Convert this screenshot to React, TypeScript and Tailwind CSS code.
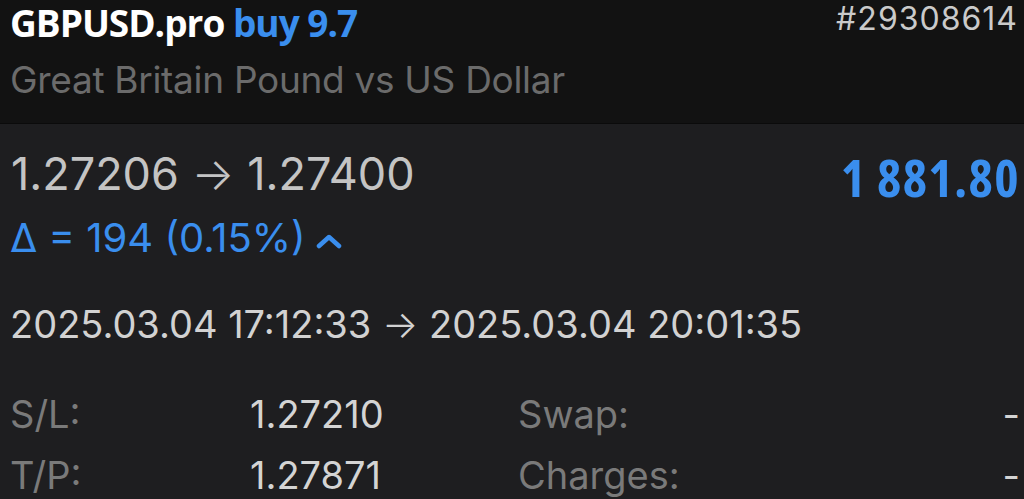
const sans = { fontFamily: 'Inter, "Liberation Sans", sans-serif' };
const cond = { fontFamily: '"Open Sans", "Liberation Sans", sans-serif' };

export default function App() {
  return (
    <div className="w-[1024px] h-[499px] overflow-hidden bg-[#1e1e20]" style={sans}>
      {/* Header */}
      <div className="h-[124px] bg-[#121212] border-b border-[#0b0b0b] flex justify-between pl-[10px] pr-[6px]">
        <div className="flex flex-col">
          <div
            className="text-[37px] font-bold font-stretch-[88%] leading-[1.2] pt-[1px] tracking-[-1px] whitespace-nowrap"
            style={cond}
          >
            <span className="text-white">GBPUSD.pro</span>{' '}
            <span className="text-[#3a8eee]">buy 9.7</span>
          </div>
          <div className="text-[37px] text-[#6b6b6b] leading-none mt-[16px] tracking-[-0.3px] whitespace-nowrap">
            Great Britain Pound vs US Dollar
          </div>
        </div>
        <div className="text-[32px] text-[#cacaca] leading-[1.2] tracking-[1px]">#29308614</div>
      </div>

      {/* Prices */}
      <div className="flex justify-between items-start pl-[11px] pr-[4px] pt-[27px]">
        <div className="text-[45px] text-[#c4c4c4] leading-none whitespace-nowrap">
          1.27206 <span className="font-light">→</span> 1.27400
        </div>
        <div
          className="text-[52px] font-bold font-stretch-condensed tracking-[1.3px] text-[#3a8eee] leading-none"
          style={cond}
        >
          1 881.80
        </div>
      </div>

      <div className="flex items-center pl-[10px] mt-[15px] text-[40px] text-[#3a8eee] leading-none whitespace-nowrap">
        <span>Δ = 194 (0.15%)</span>
        <svg width="26" height="16" viewBox="0 0 26 16" className="ml-[10px] mt-[6px]">
          <polyline
            points="3,13 13,4 23,13"
            fill="none"
            stroke="#3a8eee"
            strokeWidth="4.5"
            strokeLinecap="round"
            strokeLinejoin="round"
          />
        </svg>
      </div>

      {/* Times */}
      <div className="pl-[10px] mt-[47px] text-[38px] text-[#d2d2d2] leading-none whitespace-nowrap">
        2025.03.04 17:12:33 <span className="font-light">→</span> 2025.03.04 20:01:35
      </div>

      {/* Details */}
      <div className="grid grid-cols-[240px_268px_1fr_auto] pl-[10px] pr-[4px] mt-[41px] text-[38px] leading-[61px] whitespace-nowrap">
        <span className="text-[#7a7a7a]">S/L:</span>
        <span className="text-[#d4d4d4]">1.27210</span>
        <span className="text-[#7a7a7a]">Swap:</span>
        <span className="text-[#d4d4d4]">-</span>
        <span className="text-[#7a7a7a]">T/P:</span>
        <span className="text-[#d4d4d4]">1.27871</span>
        <span className="text-[#7a7a7a]">Charges:</span>
        <span className="text-[#d4d4d4]">-</span>
      </div>
    </div>
  );
}
